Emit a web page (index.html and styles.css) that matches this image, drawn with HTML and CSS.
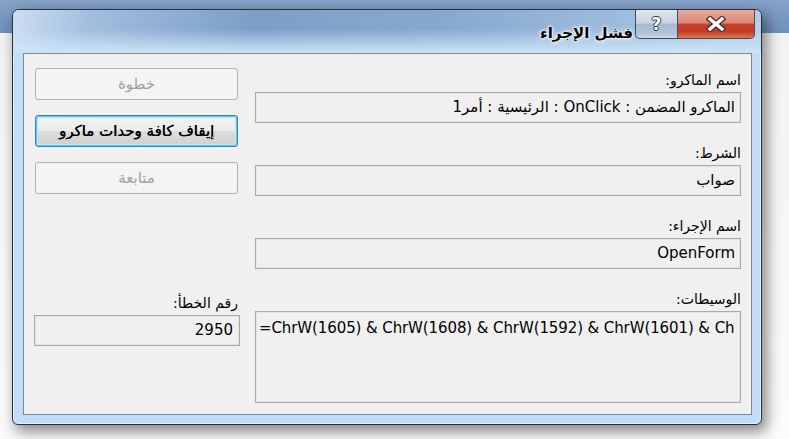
FILE: index.html
```html
<!DOCTYPE html>
<html lang="ar">
<head>
    <meta charset="utf-8">
    <title>فشل الإجراء</title>
    <link rel="stylesheet" href="styles.css">
</head>
<body>
    <div class="window">
        <div class="titlebar">
            <div class="caption-buttons">
                <div class="cap-btn close">
                    <svg width="22" height="16" viewBox="0 0 22 16">
                        <path d="M5 3 L17 13 M17 3 L5 13" stroke="#4a2a24" stroke-width="6" stroke-linecap="square"/>
                        <path d="M5 3 L17 13 M17 3 L5 13" stroke="#ffffff" stroke-width="3.4" stroke-linecap="square"/>
                    </svg>
                </div>
                <div class="cap-btn help"><span>?</span></div>
            </div>
            <div class="title">فشل الإجراء</div>
        </div>

        <div class="client">
            <div class="fields">
                <div class="field">
                    <div class="label">اسم الماكرو:</div>
                    <div class="box">الماكرو المضمن : OnClick : الرئيسية : أمر1</div>
                </div>
                <div class="field">
                    <div class="label">الشرط:</div>
                    <div class="box">صواب</div>
                </div>
                <div class="field">
                    <div class="label">اسم الإجراء:</div>
                    <div class="box">OpenForm</div>
                </div>
                <div class="field">
                    <div class="label">الوسيطات:</div>
                    <div class="box multi">=ChrW(1605) &amp; ChrW(1608) &amp; ChrW(1592) &amp; ChrW(1601) &amp; Ch</div>
                </div>
            </div>

            <div class="side">
                <div class="btn">خطوة</div>
                <div class="btn default">إيقاف كافة وحدات ماكرو</div>
                <div class="btn">متابعة</div>
                <div class="label err-label">رقم الخطأ:</div>
                <div class="box">2950</div>
            </div>
        </div>
    </div>
</body>
</html>
```

FILE: styles.css
```css
body {
    margin: 0;
    width: 789px;
    height: 439px;
    overflow: hidden;
    background: linear-gradient(to bottom, #86a2c7 0, #6e8fba 33px, #f2f2f2 33px, #fbfbfb 100%);
    font-family: "DejaVu Sans", sans-serif;
    font-size: 14px;
    color: #000;
}

.window {
    direction: rtl;
    width: 750px;
    height: 416px;
    box-sizing: border-box;
    margin: 9px 0 0 12px;
    border: 1px solid #26323e;
    border-radius: 7px 7px 6px 6px;
    background: #c2ddf7;
    box-shadow: 4px 6px 14px 1px rgba(0, 0, 0, 0.45), inset 0 0 0 1px rgba(255, 255, 255, 0.55);
}

.titlebar {
    display: flex;
    align-items: flex-start;
    height: 43px;
    padding-right: 6px;
    border-radius: 6px 6px 0 0;
    background:
        linear-gradient(to bottom, rgba(194, 221, 247, 0) 0, rgba(194, 221, 247, 0) 45%, rgba(205, 228, 249, 1) 100%),
        linear-gradient(100deg, #cddff1 0%, #a3bfdf 10%, #7d9ec7 32%, #88a9cf 58%, #9dbbdd 80%, #b5cfea 100%);
}

.caption-buttons { display: flex; }

.cap-btn {
    height: 29px;
    box-sizing: border-box;
    border: 1px solid #3e4b59;
    border-top: none;
    display: flex;
    align-items: center;
    justify-content: center;
}
.close {
    width: 78px;
    border-radius: 0 0 5px 0;
    background: linear-gradient(to bottom, #e7aa9d 0, #db8877 45%, #c4402b 52%, #c23d27 78%, #dc7a5c 100%);
}
.help {
    width: 42px;
    border-right: none;
    border-radius: 0 0 0 5px;
    background: linear-gradient(to bottom, #dfe7f0 0, #c7d4e2 45%, #a9bbce 52%, #b3c4d6 85%, #cbd9e7 100%);
}
.help span {
    font-family: "DejaVu Sans", sans-serif;
    font-weight: bold;
    font-size: 17px;
    color: #fff;
    text-shadow: 1px 0 0 #2f3d4b, -1px 0 0 #2f3d4b, 0 1px 0 #2f3d4b, 0 -1px 0 #2f3d4b;
}

.title {
    margin: 13px 2px 0 0;
    font-size: 15px;
    font-weight: bold;
    line-height: 20px;
    text-shadow: 0 0 5px #fff, 0 0 3px #fff, 0 0 2px #fff;
}

.client {
    display: flex;
    gap: 15px;
    height: 362px;
    box-sizing: border-box;
    margin: 0 9px 0 10px;
    padding: 14px 10px 0 10px;
    border: 1px solid #7c8895;
    background: #f0f0f0;
}

.fields { width: 486px; padding-top: 2px; }
.field { margin-bottom: 20px; }

.label {
    height: 20px;
    line-height: 20px;
    margin-bottom: 2px;
    white-space: nowrap;
}

.box {
    height: 31px;
    box-sizing: border-box;
    padding: 0 5px;
    line-height: 29px;
    border: 1px solid #a9a9a9;
    box-shadow: inset 0 0 0 1px #e4e4e4;
    background: #f0f0f0;
    white-space: nowrap;
    overflow: hidden;
    font-size: 15px;
}
.box.multi {
    height: 92px;
    direction: ltr;
    text-align: left;
    line-height: 18px;
    padding: 7px 3px;
    letter-spacing: -0.1px;
}

.side { width: 206px; }

.btn {
    height: 32px;
    box-sizing: border-box;
    margin: 0 2px 15px 1px;
    border: 1px solid #adb2b5;
    border-radius: 3px;
    background: #f4f4f4;
    color: #a0a0a0;
    display: flex;
    align-items: center;
    justify-content: center;
    font-size: 15px;
}
.btn.default {
    border-color: #3c7fb1;
    box-shadow: inset 0 0 0 1px #5dcdf7, inset 0 0 0 2px #b6e6fa;
    background: linear-gradient(to bottom, #f2f2f2 0, #ebebeb 50%, #dddddd 50%, #cfcfcf 100%);
    color: #000;
    text-shadow: 0.4px 0 0 #000;
}

.err-label { margin-top: 99px; padding-right: 2px; }
.side .box { padding-right: 6px; }
```
